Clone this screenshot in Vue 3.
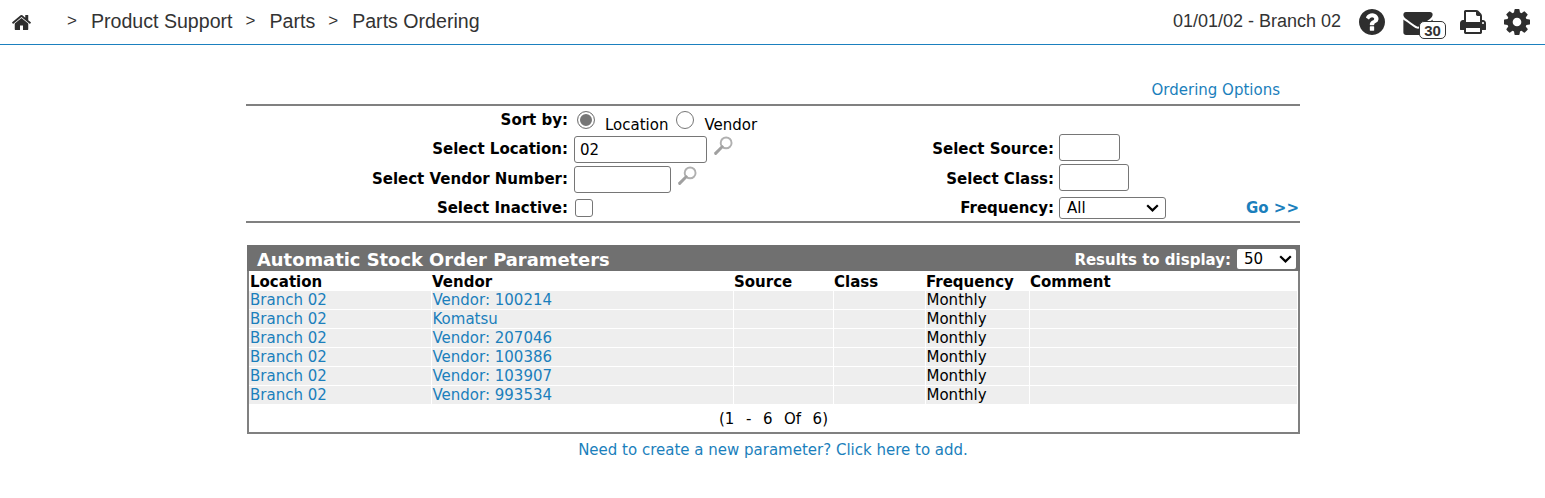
<script setup>
const rows = [
  { vendor: 'Vendor: 100214' },
  { vendor: 'Komatsu' },
  { vendor: 'Vendor: 207046' },
  { vendor: 'Vendor: 100386' },
  { vendor: 'Vendor: 103907' },
  { vendor: 'Vendor: 993534' }
]
</script>

<template>
  <div class="page">
    <header class="topbar">
      <svg class="home" viewBox="0 0 1792 1792"><path d="M1472 992v480q0 26-19 45t-45 19h-384v-384h-256v384h-384q-26 0-45-19t-19-45v-480q0-1 .5-3t.5-3l575-474 575 474q1 2 1 6zm223-69l-62 74q-8 9-21 11h-3q-13 0-21-7l-692-577-692 577q-12 8-24 7-13-2-21-11l-62-74q-8-10-7-23.5t11-21.5l719-599q32-26 76-26t76 26l244 204v-195q0-14 9-23t23-9h192q14 0 23 9t9 23v408l219 182q10 8 11 21.5t-7 23.5z"/></svg>
      <nav class="crumbs">
        <span class="sep">&gt;</span><span>Product Support</span>
        <span class="sep">&gt;</span><span>Parts</span>
        <span class="sep">&gt;</span><span>Parts Ordering</span>
      </nav>
      <div class="tools">
        <span class="date">01/01/02 - Branch 02</span>
        <svg class="tool" viewBox="128 128 1536 1536"><path d="M1024 1376v-192q0-14-9-23t-23-9h-192q-14 0-23 9t-9 23v192q0 14 9 23t23 9h192q14 0 23-9t9-23zm256-672q0-88-55.5-163t-138.5-116-170-41q-243 0-371 213-15 24 8 42l132 100q7 6 19 6 16 0 25-12 53-68 86-92 34-24 86-24 48 0 85.5 26t37.5 59q0 38-20 61t-68 45q-63 28-115.5 86.5t-52.5 125.5v36q0 14 9 23t23 9h192q14 0 23-9t9-23q0-19 21.5-49.5t54.5-49.5q32-18 49-28.5t46-35 44.5-48 28-60.5 12.5-81zm384 192q0 209-103 385.5t-279.5 279.5-385.5 103-385.5-103-279.5-279.5-103-385.5 103-385.5 279.5-279.5 385.5-103 385.5 103 279.5 279.5 103 385.5z"/></svg>
        <div class="mail">
          <svg class="mail-icon" viewBox="0 256 1792 1408"><path d="M1792 710v794q0 66-47 113t-113 47h-1472q-66 0-113-47t-47-113v-794q44 49 101 87 362 246 497 345 57 42 92.5 65.5t94.5 48 110 24.5h2q51 0 110-24.5t94.5-48 92.5-65.5q170-123 498-345 57-39 100-87zm0-294q0 79-49 151t-122 123q-376 261-468 325-10 7-42.5 30.5t-54 38-52 32.5-57.5 27-50 9h-2q-23 0-50-9t-57.5-27-52-32.5-54-38-42.5-30.5q-91-64-262-182.5t-205-142.5q-62-42-117-115.5t-55-136.5q0-78 41.5-130t118.5-52h1472q65 0 112.5 47t47.5 113z"/></svg>
          <span class="badge">30</span>
        </div>
        <svg class="tool print" viewBox="0 128 1728 1536"><path d="M448 1536h896v-256h-896v256zm0-640h896v-384h-160q-40 0-68-28t-28-68v-160h-640v640zm1152 64q0-26-19-45t-45-19-45 19-19 45 19 45 45 19 45-19 19-45zm128 0v416q0 13-9.5 22.5t-22.5 9.5h-224v160q0 40-28 68t-68 28h-960q-40 0-68-28t-28-68v-160h-224q-13 0-22.5-9.5t-9.5-22.5v-416q0-79 56.5-135.5t135.5-56.5h64v-544q0-40 28-68t68-28h672q40 0 88 20t76 48l152 152q28 28 48 76t20 88v256h64q79 0 135.5 56.5t56.5 135.5z"/></svg>
        <svg class="tool" viewBox="128 128 1536 1536"><path d="M1152 896q0-106-75-181t-181-75-181 75-75 181 75 181 181 75 181-75 75-181zm512-109v222q0 12-8 23t-20 13l-185 28q-19 54-39 91 35 50 107 138 10 12 10 25t-9 23q-27 37-99 108t-94 71q-12 0-26-9l-138-108q-44 23-91 38-16 136-29 186-7 28-36 28h-222q-14 0-24.5-8.5t-11.5-21.5l-28-184q-49-16-90-37l-141 107q-10 9-25 9-14 0-25-11-126-114-165-168-7-10-7-23 0-12 8-23 15-21 51-66.5t54-70.5q-27-50-41-99l-183-27q-13-2-21-12.5t-8-23.5v-222q0-12 8-23t19-13l186-28q14-46 39-92-40-57-107-138-10-12-10-24 0-10 9-23 26-36 98.5-107.5t94.5-71.5q13 0 26 10l138 107q44-23 91-38 16-136 29-186 7-28 36-28h222q14 0 24.5 8.5t11.5 21.5l28 184q49 16 90 37l142-107q9-9 24-9 13 0 25 10 129 119 165 170 7 8 7 22 0 12-8 23-15 21-51 66.5t-54 70.5q26 50 41 98l183 28q13 2 21 12.5t8 23.5z"/></svg>
      </div>
    </header>

    <main class="content">
      <div class="options"><a class="link">Ordering Options</a></div>

      <form class="filters" @submit.prevent>
        <label class="lbl">Sort by:</label>
        <div class="ctl sort">
          <span class="radio on"></span><span class="radio-text">Location</span>
          <span class="radio"></span><span class="radio-text">Vendor</span>
        </div>
        <span></span><span></span><span></span>

        <label class="lbl">Select Location:</label>
        <div class="ctl low">
          <input class="inp w133" value="02" />
          <svg class="lens" viewBox="0 0 24 24"><circle cx="15" cy="9" r="6.2" fill="none" stroke="#b0b0b0" stroke-width="2.2"/><path d="M10.5 13.5L3 21" stroke="#a0a0a0" stroke-width="3.4" stroke-linecap="round"/></svg>
        </div>
        <label class="lbl">Select Source:</label>
        <div class="ctl top"><input class="inp w61" /></div>
        <span></span>

        <label class="lbl">Select Vendor Number:</label>
        <div class="ctl low">
          <input class="inp w97" />
          <svg class="lens" viewBox="0 0 24 24"><circle cx="15" cy="9" r="6.2" fill="none" stroke="#b0b0b0" stroke-width="2.2"/><path d="M10.5 13.5L3 21" stroke="#a0a0a0" stroke-width="3.4" stroke-linecap="round"/></svg>
        </div>
        <label class="lbl">Select Class:</label>
        <div class="ctl top"><input class="inp w70" /></div>
        <span></span>

        <label class="lbl last">Select Inactive:</label>
        <div class="ctl"><span class="check"></span></div>
        <label class="lbl last">Frequency:</label>
        <div class="ctl"><select class="sel freq"><option>All</option></select></div>
        <a class="go">Go &gt;&gt;</a>
      </form>

      <section class="panel">
        <div class="panel-head">
          <h2>Automatic Stock Order Parameters</h2>
          <div class="results">
            <span class="results-label">Results to display:</span>
            <select class="sel count"><option>50</option></select>
          </div>
        </div>
        <table>
          <colgroup>
            <col class="c1" /><col class="c2" /><col class="c3" /><col class="c4" /><col class="c5" /><col />
          </colgroup>
          <thead>
            <tr><th>Location</th><th>Vendor</th><th>Source</th><th>Class</th><th>Frequency</th><th>Comment</th></tr>
          </thead>
          <tbody>
            <tr v-for="(r, i) in rows" :key="i">
              <td><a class="link">Branch 02</a></td>
              <td><a class="link">{{ r.vendor }}</a></td>
              <td></td><td></td>
              <td>Monthly</td>
              <td></td>
            </tr>
          </tbody>
        </table>
        <div class="count-line">(1&nbsp; -&nbsp; 6&nbsp; Of&nbsp; 6)</div>
      </section>

      <div class="add"><a class="link">Need to create a new parameter? Click here to add.</a></div>
    </main>
  </div>
</template>

<style>
body { margin: 0; background: #fff; }
</style>

<style scoped>
.page {
  width: 1545px;
  height: 498px;
  overflow: hidden;
  font-family: "DejaVu Sans", Verdana, sans-serif;
  font-size: 15px;
  color: #000;
}
.topbar {
  height: 44px;
  border-bottom: 1px solid #1b80bf;
  display: flex;
  align-items: center;
  padding: 0 15px 0 11px;
  font-family: "Liberation Sans", Arial, sans-serif;
  font-size: 19.6px;
  color: #333;
}
.home { width: 21px; height: 21px; fill: #2e2e2e; }
.crumbs { display: flex; align-items: center; margin: 0 0 2px 35px; }
.sep { font-size: 17px; margin-left: 13px; margin-right: 14px; }
.sep:first-child { margin-left: 0; }
.tools { margin-left: auto; display: flex; align-items: center; }
.date { font-size: 18px; margin: 0 18px 2px 0; }
.tool { width: 26px; height: 26px; fill: #2e2e2e; }
.print { margin: 0 18px 0 13px; width: 27px; }
.mail { position: relative; width: 43px; height: 32px; margin-left: 18px; }
.mail-icon { position: absolute; left: 0; top: 6px; width: 30px; height: 23px; fill: #2e2e2e; }
.badge {
  position: absolute;
  left: 16px;
  top: 15px;
  width: 25px;
  height: 16px;
  background: #fff;
  border: 1px solid #333;
  border-radius: 5px;
  font-size: 15px;
  font-weight: 700;
  line-height: 18px;
  text-align: center;
}
.content { width: 1054px; margin-left: 246px; }
.link { color: #1b7fbc; cursor: pointer; }
.options {
  height: 61px;
  box-sizing: border-box;
  padding: 36px 20px 0 0;
  text-align: right;
  border-bottom: 2px solid #808080;
  line-height: 19px;
}
.filters {
  display: grid;
  grid-template-columns: 322px 359px 127px 112px 134px;
  grid-template-rows: 28px 30px 30px 27px;
  border-bottom: 2px solid #808080;
  align-items: center;
}
.lbl {
  font-weight: 700;
  text-align: right;
  white-space: nowrap;
  line-height: 19px;
}
.last { margin-top: 2px; }
.ctl { padding-left: 5px; display: flex; align-items: center; }
.low { align-self: start; padding-top: 2px; padding-left: 6px; }
.top { align-self: start; }
.sort { height: 28px; }
.radio {
  width: 18px;
  height: 18px;
  box-sizing: border-box;
  border: 1px solid #767676;
  border-radius: 50%;
  margin-left: 4px;
  background: #fff;
}
.radio.on {
  box-shadow: inset 0 0 0 2px #fff, inset 0 0 0 10px #767676;
}
.radio-text { margin: 11px 4px 0 10px; line-height: 19px; }
.inp {
  box-sizing: border-box;
  height: 27px;
  border: 1px solid #767676;
  border-radius: 3px;
  padding: 0 5px;
  background: #fff;
  font: inherit;
  color: #000;
  outline: none;
}
.w133 { width: 133px; }
.w97 { width: 97px; }
.w61 { width: 61px; }
.w70 { width: 70px; }
.lens { width: 21px; height: 21px; margin: -4px 0 5px 6px; }
.check {
  width: 18px;
  height: 18px;
  margin-left: 2px;
  box-sizing: border-box;
  border: 1px solid #767676;
  border-radius: 3px;
  background: #fff;
}
.sel {
  appearance: none;
  -webkit-appearance: none;
  box-sizing: border-box;
  border: 1px solid #767676;
  border-radius: 3px;
  background: #fff url("data:image/svg+xml,%3Csvg xmlns='http://www.w3.org/2000/svg' width='13' height='8' viewBox='0 0 13 8'%3E%3Cpath d='M1.2 1.2L6.5 6.4L11.8 1.2' fill='none' stroke='black' stroke-width='2.2'/%3E%3C/svg%3E") no-repeat right 6px center;
  font: 400 15px "DejaVu Sans", Verdana, sans-serif;
  color: #000;
  height: 22px;
  padding: 0 0 0 7px;
}
.freq { width: 107px; }
.go {
  color: #1b7fbc;
  font-weight: 700;
  text-align: right;
  padding-right: 1px;
  white-space: nowrap;
}
.panel {
  margin: 22px 0 0 1px;
  width: 1053px;
  box-sizing: border-box;
  border: 2px solid #808080;
  border-top: 0;
}
.panel-head {
  height: 26px;
  margin: 0 -2px;
  padding: 0 4px 0 10px;
  background: #707070;
  color: #fff;
  display: flex;
  align-items: center;
  justify-content: space-between;
}
h2 { margin: 2px 0 0; font-size: 17.9px; font-weight: 700; }
.results { display: flex; align-items: center; font-weight: 700; font-size: 15px; margin-top: 2px; }
.results-label { margin-top: 2px; }
.count { width: 59px; height: 20px; margin-left: 6px; border: 0; border-radius: 2px; background-position: right 4px center; }
table {
  width: 100%;
  table-layout: fixed;
  border-collapse: collapse;
}
.c1 { width: 182px; }
.c2 { width: 302px; }
.c3 { width: 100px; }
.c4 { width: 92px; }
.c5 { width: 104px; }
th {
  height: 20px;
  box-sizing: border-box;
  padding: 2px 0 0 1px;
  text-align: left;
  font-weight: 700;
  font-size: 15px;
  line-height: 18px;
}
td {
  height: 18px;
  padding: 0 0 0 1px;
  background: #eee;
  border-bottom: 1px solid #fff;
  border-right: 1px solid #fff;
  line-height: 18px;
  white-space: nowrap;
}
.count-line { height: 27px; line-height: 28px; text-align: center; word-spacing: 1px; }
.add { text-align: center; margin-top: 7px; line-height: 19px; }
</style>
